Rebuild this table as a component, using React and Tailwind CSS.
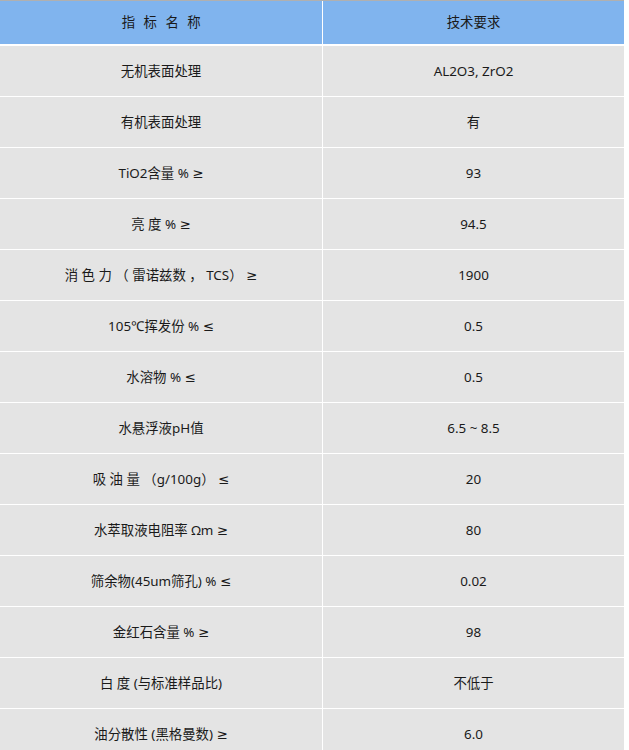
const rows = [
  ["无机表面处理", "AL2O3, ZrO2"],
  ["有机表面处理", "有"],
  ["TiO2含量 % ≥", "93"],
  ["亮 度 % ≥", "94.5"],
  ["消 色 力 （ 雷诺兹数 ， TCS） ≥", "1900"],
  ["105℃挥发份 % ≤", "0.5"],
  ["水溶物 % ≤", "0.5"],
  ["水悬浮液pH值", "6.5 ~ 8.5"],
  ["吸 油 量 （g/100g） ≤", "20"],
  ["水萃取液电阻率 Ωm ≥", "80"],
  ["筛余物(45um筛孔) % ≤", "0.02"],
  ["金红石含量 % ≥", "98"],
  ["白 度 (与标准样品比)", "不低于"],
  ["油分散性 (黑格曼数) ≥", "6.0"],
];

export default function App() {
  return (
    <div
      className="w-[629px] h-[750px] overflow-hidden bg-white text-[13.4px] text-[#1a1a1a]"
      style={{ fontFamily: '"Noto Sans", "DejaVu Sans", "Noto Sans CJK SC", sans-serif' }}
    >
      <div className="w-[624px] border-t border-[#b0b0b0]">
        {/* header */}
        <div className="grid grid-cols-[322px_1fr] gap-x-px h-[43px] mb-[2px]">
          <div className="bg-[#80b4ee] flex items-center justify-center whitespace-pre tracking-[2.5px] pl-[3px]">指 标 名 称</div>
          <div className="bg-[#80b4ee] flex items-center justify-center">技术要求</div>
        </div>
        {/* body */}
        <div className="flex flex-col gap-y-px">
          {rows.map(([name, value], i) => (
            <div key={i} className="grid grid-cols-[322px_1fr] gap-x-px h-[50px]">
              <div className="bg-[#e4e4e4] flex items-center justify-center whitespace-pre">{name}</div>
              <div className="bg-[#e4e4e4] flex items-center justify-center">{value}</div>
            </div>
          ))}
        </div>
      </div>
    </div>
  );
}
